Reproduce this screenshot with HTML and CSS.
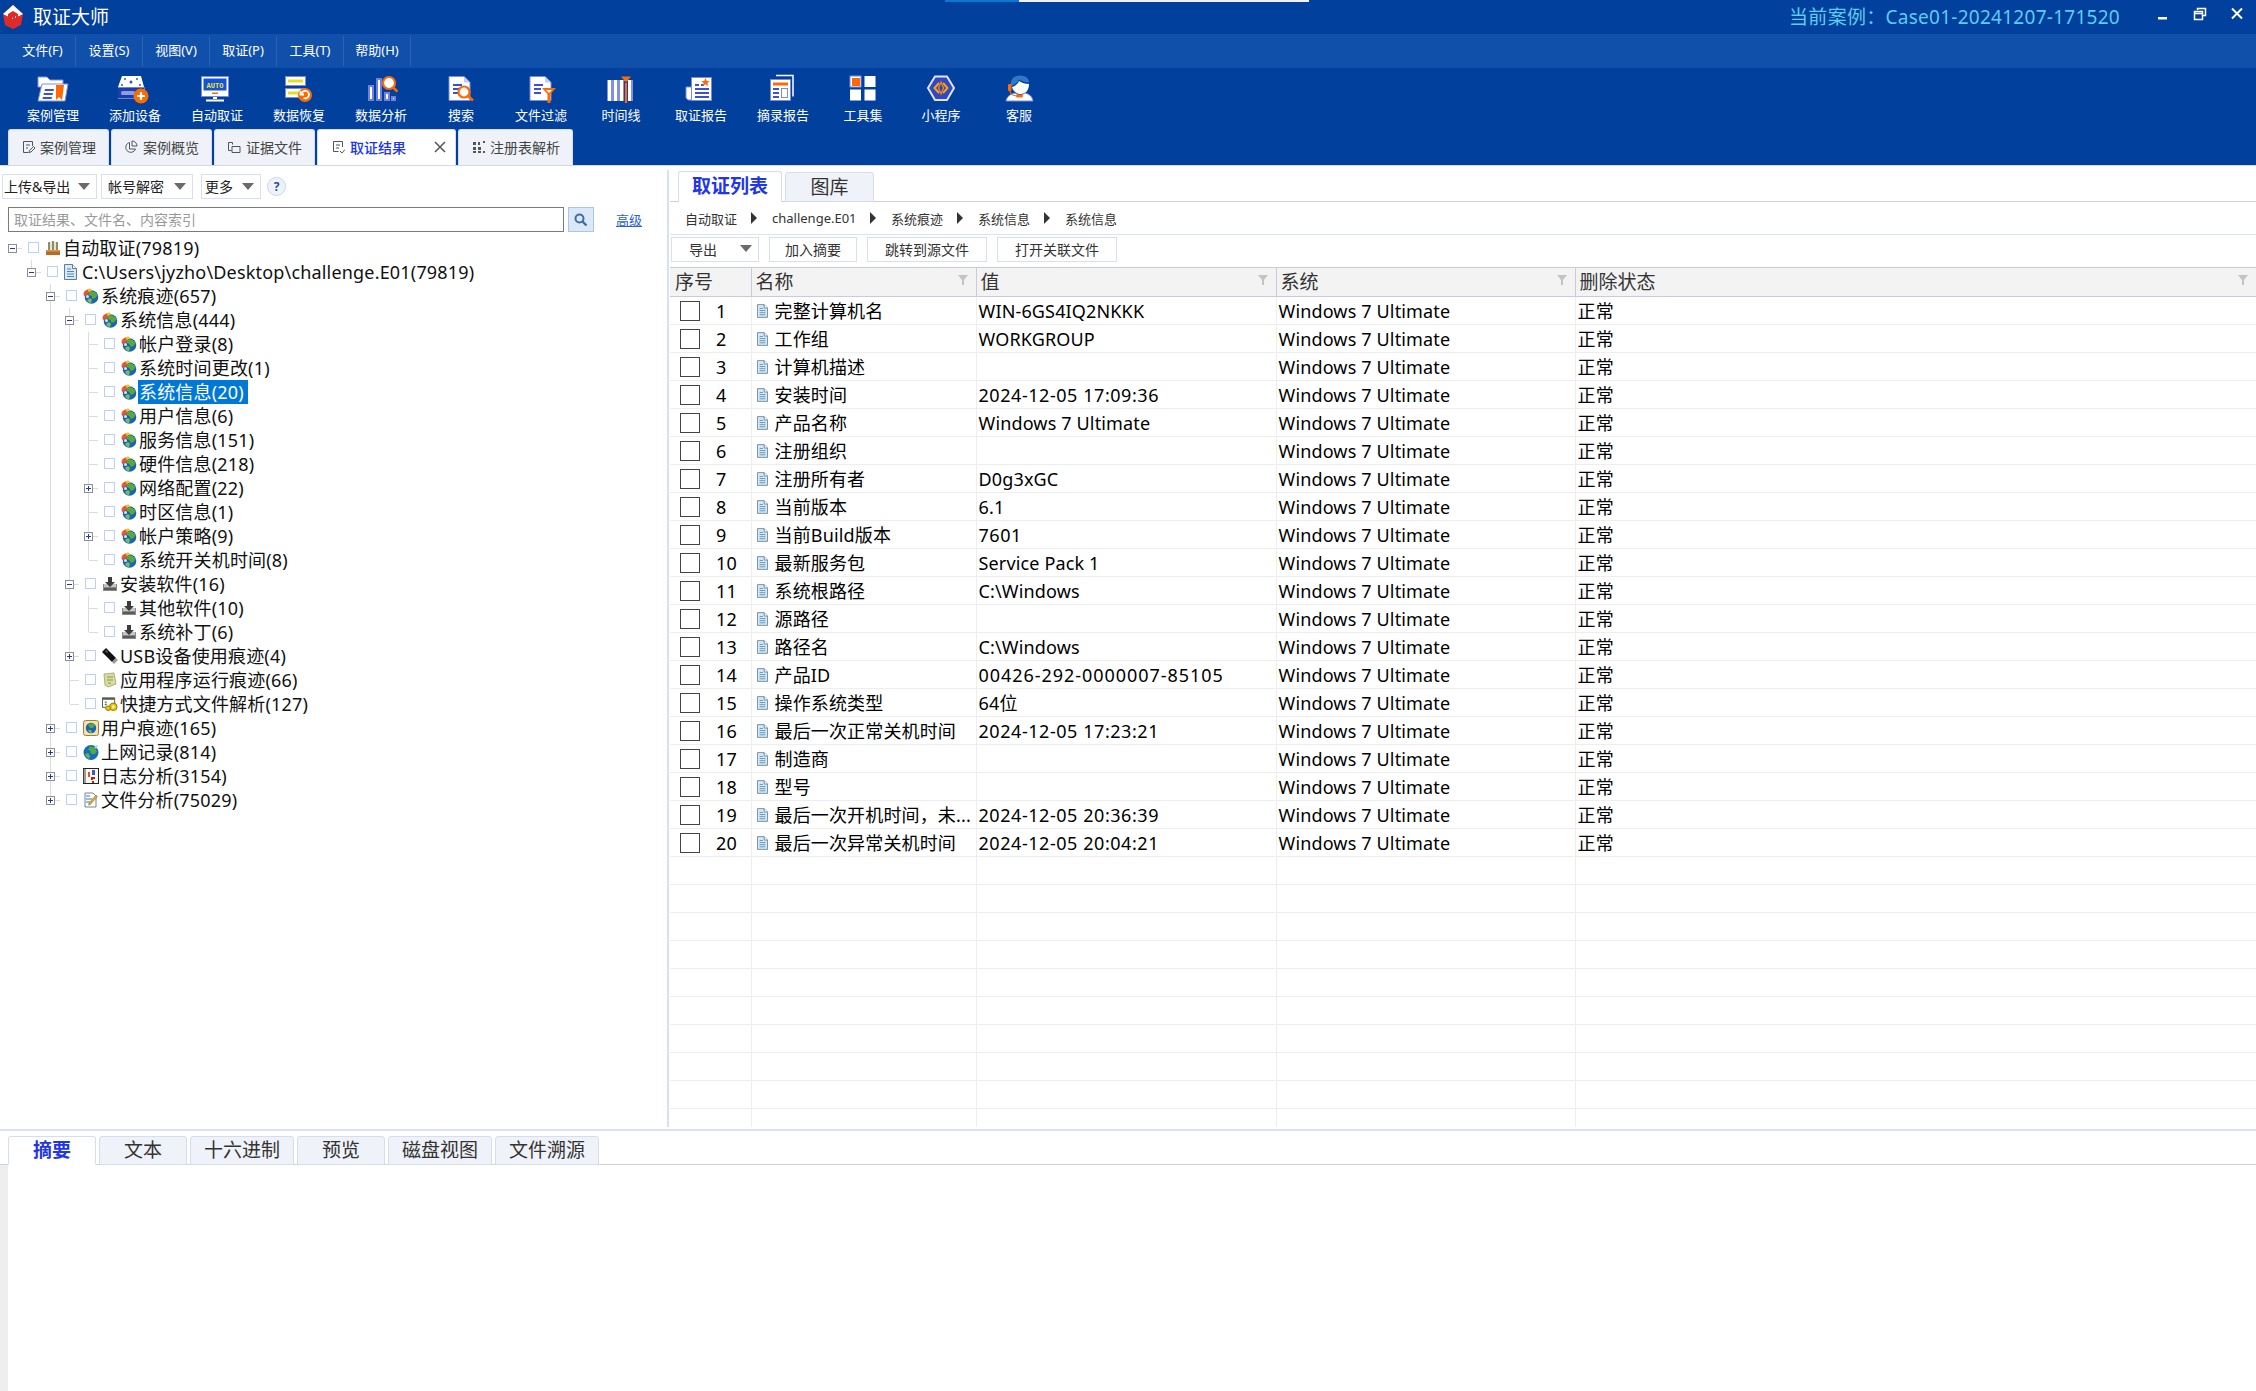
FILE: index.html
```html
<!DOCTYPE html>
<html lang="zh-CN">
<head>
<meta charset="utf-8">
<title>取证大师</title>
<link rel="stylesheet" href="styles.css">
</head>
<body>
<svg class="defs" aria-hidden="true">
  <symbol id="globe" viewBox="0 0 16 16">
    <circle cx="8.500" cy="9" r="6.800" fill="#1c62b8"/>
    <path d="M6 4c3-2 7 0 8.500 3l-2 3-3 1-1-3-3-1z" fill="#58a83c"/>
    <path d="M4 12l3-2 2 2-1 3c-2 0-3-1-4-3z" fill="#7cc04c"/>
    <path d="M.5 6c0-2 2-4.500 4.500-4.500l2 2.500-3 3-3 1z" fill="#e05a30"/>
    <path d="M4 1l4-.5 1 2-3 1.500z" fill="#f0c030"/>
    <circle cx="4.500" cy="8.500" r="1.500" fill="#cfe4fa"/>
  </symbol>
  <symbol id="setup" viewBox="0 0 16 16">
    <path d="M1 8h14v7H1z" fill="#8a8a8a"/>
    <path d="M2 8h12v3H2z" fill="#c4c4c4"/>
    <path d="M6 1h4v5h3l-5 5-5-5h3z" fill="#3c3c3c"/>
    <path d="M2 12h12v2H2z" fill="#5a5a5a"/>
  </symbol>
  <symbol id="usb" viewBox="0 0 16 16">
    <path d="M0 4l4-4 10 10-4 4z" fill="#111"/>
    <path d="M10 14l4-4 2 2-4 4z" fill="#999"/>
    <path d="M3 3l1-1 2 2-1 1z" fill="#666"/>
  </symbol>
  <symbol id="note" viewBox="0 0 16 16">
    <path d="M2 2l10-1 2 11-8 3-3-2z" fill="#d8dc9c" stroke="#9aa070" stroke-width=".8"/>
    <path d="M5 5h6M5 8h6M6 11h3" stroke="#8b9a5c" stroke-width="1"/>
  </symbol>
  <symbol id="shortcut" viewBox="0 0 17 16">
    <rect x=".5" y="1.500" width="13" height="10" fill="#fff" stroke="#555"/>
    <path d="M1 1.500h12v2H1z" fill="#555"/>
    <path d="M3 6h2M3 8.500h2" stroke="#2a8a3a" stroke-width="1.400"/>
    <circle cx="12" cy="11" r="4" fill="#f2c800" stroke="#8a7400"/>
    <circle cx="12" cy="11" r="1.300" fill="#fff"/>
    <circle cx="6.500" cy="12.500" r="2.500" fill="#f2c800" stroke="#8a7400"/>
  </symbol>
  <symbol id="user" viewBox="0 0 16 16">
    <rect x=".5" y=".5" width="15" height="15" rx="2" fill="#f3e2ae" stroke="#a8802c"/>
    <circle cx="8" cy="8" r="5.200" fill="#1c62b8"/>
    <path d="M5 5c2-2 5-2 7 0l-2 3-3 0z" fill="#58a83c"/>
    <path d="M5 10l3 0 1 3c-2 0-3-1-4-3z" fill="#7cc04c"/>
  </symbol>
  <symbol id="web" viewBox="0 0 16 16">
    <circle cx="8" cy="8.500" r="7.500" fill="#1c68c0"/>
    <path d="M7 2.500c3 0 6 2 7 5l-3 3-3-1-1-3-2-1z" fill="#4cae3c"/>
    <path d="M2 10l3-1 2 3-1 3c-2-1-3-3-4-5z" fill="#62b848"/>
    <path d="M11 3l3-2 1 1-2 3z" fill="#a8d4f4"/>
  </symbol>
  <symbol id="log" viewBox="0 0 16 16">
    <rect x=".5" y=".5" width="15" height="15" fill="#f8f8ec" stroke="#222"/>
    <path d="M.5 1v14M2 1v14" stroke="#444"/>
    <path d="M5 4h2v5H5z" fill="#e04a40"/>
    <path d="M9 2h3v5H9z" fill="#3a58d0"/>
    <path d="M8 9h4v2h-2v1H8z" fill="#b02020"/>
    <path d="M9 13h2v2H9z" fill="#b02020"/>
  </symbol>
  <symbol id="file" viewBox="0 0 16 16">
    <path d="M2 1h8l3 3v11H2z" fill="#fff" stroke="#6a86a8"/>
    <path d="M3 4h4M3 7h6M3 10h6" stroke="#3a7ac0"/>
    <path d="M6 11l7-8 1.500 1.500-7 8-2 .5z" fill="#e0b030" stroke="#7a6420" stroke-width=".5"/>
  </symbol>
  <symbol id="box" viewBox="0 0 16 16">
    <path d="M1 10h14v5H1z" fill="#b86a28"/>
    <path d="M3 2h2v9H3zM7 1h2v10H7zM11 2h2v9h-2z" fill="#8a8f70"/>
    <path d="M5 2h2v9H5zM9 2h2v9H9z" fill="#e8e4c8"/>
    <path d="M1 10h14v1.500H1z" fill="#e09848"/>
  </symbol>
  <symbol id="doc" viewBox="0 0 13 16">
    <path d="M.5 .5h8l4 4v11H.5z" fill="#d8e8f4" stroke="#5f7c94"/>
    <path d="M8.500 .5v4h4" fill="#fff" stroke="#5f7c94"/>
    <path d="M3 5h4M3 7.500h7M3 10h7M3 12.500h7" stroke="#4c8cb8"/>
  </symbol>
  <symbol id="funnel" viewBox="0 0 10 10">
    <path d="M0 0h10L6 5v5H4V5z" fill="#c4c4c8"/>
  </symbol>
</svg>

<div class="top-sliver"><span class="sliver-blue"></span><span class="sliver-white"></span></div>

<header class="titlebar">
  <svg class="logo" viewBox="0 0 20 24">
    <path d="M10 0l10 9-2 11-8 4-8-4-2-11z" fill="#e02a2a"/>
    <path d="M10 0l10 9-10 5L0 9z" fill="#fff"/>
    <path d="M5 9l5-3 5 3v8l-2 1v-7l-1 .5v7l-2 1v-7l-1 .5v7l-2-1-2-1z" fill="#e02a2a"/>
  </svg>
  <span class="app-name">取证大师</span>
  <span class="spacer"></span>
  <span class="case-name">当前案例：Case01-20241207-171520</span>
  <div class="win-controls">
    <svg class="win-btn" viewBox="0 0 14 14"><path d="M2 10h9v2.500H2z" fill="#fff"/></svg>
    <svg class="win-btn" viewBox="0 0 14 14"><path d="M4.500 3V1.500h8v7H10M1.500 4.500h8v8h-8zM1.500 4.500h8v2h-8z" fill="none" stroke="#fff" stroke-width="1.500"/></svg>
    <svg class="win-btn" viewBox="0 0 14 14"><path d="M2 1.500l10 10M12 1.500l-10 10" stroke="#fff" stroke-width="2"/></svg>
  </div>
</header>

<nav class="menubar">
  <span class="menu-item">文件(F)</span>
  <span class="menu-item">设置(S)</span>
  <span class="menu-item">视图(V)</span>
  <span class="menu-item">取证(P)</span>
  <span class="menu-item">工具(T)</span>
  <span class="menu-item">帮助(H)</span>
</nav>

<section class="toolbar">
  <div class="tool">
    <svg class="tool-icon" viewBox="1 0 34 30">
      <path d="M3 3h9l3 3h13v7H3z" fill="#fff" stroke="#8391df"/>
      <path d="M7 10h26l-3 17H3z" fill="#fff" stroke="#8391df"/>
      <path d="M10 15h9l-.5 2h-9zM9 19h9l-.5 2h-9zM8 23h9l-.5 2h-9z" fill="#3c50d2"/>
      <path d="M21 11h8l-2 15-3-3-3 3z" fill="#ff6a00"/>
    </svg>
    <span class="tool-label">案例管理</span>
  </div>
  <div class="tool">
    <svg class="tool-icon" viewBox="2 0 34 30">
      <path d="M6 2h19l3 11H2z" fill="#fff"/>
      <circle cx="9" cy="5" r="1" fill="#3c50d2"/><circle cx="21" cy="5" r="1" fill="#3c50d2"/><circle cx="15" cy="8" r="1.500" fill="#3c50d2"/>
      <circle cx="6" cy="11" r="1" fill="#3c50d2"/><circle cx="24" cy="11" r="1" fill="#3c50d2"/>
      <path d="M1.500 13.500h27v11h-27z" fill="#1c3ea8" stroke="#6f80de"/>
      <rect x="5" y="17" width="14" height="4" rx="1.500" fill="#8e9ce4"/>
      <circle cx="25" cy="22" r="7.500" fill="#ff6a00"/>
      <path d="M25 18v8M21 22h8" stroke="#fff" stroke-width="2.200"/>
    </svg>
    <span class="tool-label">添加设备</span>
  </div>
  <div class="tool">
    <svg class="tool-icon" viewBox="2 0 34 30">
      <path d="M3.500 2.500h27v20h-27z" fill="#fff" stroke="#7b8adf"/>
      <path d="M5.500 4.500h23v12h-23z" fill="#1452d8"/>
      <text class="auto-text" x="17" y="13.500">AUTO</text>
      <path d="M14 18.500h6v1.500h-6z" fill="#ff6a00"/>
      <path d="M15 23h4v2h-4zM8 25.500h18v2H8z" fill="#fff"/>
    </svg>
    <span class="tool-label">自动取证</span>
  </div>
  <div class="tool">
    <svg class="tool-icon" viewBox="0 0 34 30">
      <rect x="3.500" y="2.500" width="20" height="9" fill="#fff" stroke="#7b8adf"/>
      <path d="M6 5.500h15v3H6z" fill="#e4e020"/>
      <rect x="3.500" y="14.500" width="20" height="9" fill="#fff" stroke="#7b8adf"/>
      <path d="M6 17.500h12v3H6z" fill="#e4e020"/>
      <circle cx="23" cy="21" r="7" fill="#ff6a00"/>
      <path d="M19.500 19.500a3.800 3.800 0 1 1 2 4.500M18.500 17v3.500H22" fill="none" stroke="#fff" stroke-width="1.800"/>
    </svg>
    <span class="tool-label">数据恢复</span>
  </div>
  <div class="tool">
    <svg class="tool-icon" viewBox="0 0 34 30">
      <path d="M4 11h6v16H4zM12 4h6v23h-6zM20 18h6v9h-6zM27 22h5v5h-5z" fill="#6f80de"/>
      <path d="M6 13h2v12H6zM14 6h2v19h-2zM22 20h2v5h-2zM29 24h1v1h-1z" fill="#fff"/>
      <circle cx="25" cy="9" r="6" fill="#fff" stroke="#ff6a00" stroke-width="2.200"/>
      <path d="M29 13.500l4.500 4" stroke="#ff6a00" stroke-width="2.600"/>
    </svg>
    <span class="tool-label">数据分析</span>
  </div>
  <div class="tool tool-s">
    <svg class="tool-icon" viewBox="0 0 34 30">
      <path d="M5 2.500h15l6 6v18H5z" fill="#fff" stroke="#7b8adf"/>
      <path d="M20 2.500v6h6" fill="#c4ccf0"/>
      <path d="M9 11h9M9 15h6M9 19h6" stroke="#3c50d2" stroke-width="2"/>
      <circle cx="20" cy="18" r="5.500" fill="#fff" stroke="#ff6a00" stroke-width="2.200"/>
      <path d="M24 22l5 4.500" stroke="#ff6a00" stroke-width="2.600"/>
    </svg>
    <span class="tool-label">搜索</span>
  </div>
  <div class="tool">
    <svg class="tool-icon" viewBox="0 0 34 30">
      <path d="M6 2.500h15l6 6v18H6z" fill="#fff" stroke="#7b8adf"/>
      <path d="M21 2.500v6h6" fill="#c4ccf0"/>
      <path d="M10 11h9M10 15h7M10 19h7" stroke="#3c50d2" stroke-width="2"/>
      <path d="M18 14h14l-5.500 6v9h-3v-9z" fill="#ff6a00"/>
      <path d="M22 16h6l-3 3z" fill="#fff"/>
    </svg>
    <span class="tool-label">文件过滤</span>
  </div>
  <div class="tool tool-s">
    <svg class="tool-icon" viewBox="0 0 34 30">
      <path d="M3 6h26v21H3z" fill="#8490da"/>
      <path d="M4 6h3v21H4zM10 6h3v21h-3zM16 6h3v21h-3zM24 6h3v21h-3z" fill="#fff"/>
      <path d="M20 7h4v22h-4z" fill="#1c3ea8"/>
      <path d="M21 9h2v20h-2z" fill="#ff6a00"/>
      <path d="M17 2.500h10l-5 6z" fill="#ff6a00"/>
    </svg>
    <span class="tool-label">时间线</span>
  </div>
  <div class="tool">
    <svg class="tool-icon" viewBox="0 0 34 30">
      <path d="M2 13h6v13H4l-2-2z" fill="#fff" stroke="#7b8adf"/>
      <path d="M7.500 3.500h20v23h-20z" fill="#fff" stroke="#7b8adf"/>
      <path d="M11 10h4v2h-4zM11 14h14v2H11zM11 18h14v2H11zM11 22h14v2H11zM17 10h3v2h-3z" fill="#3c50d2"/>
      <path d="M21.500 4l1.300 3h3l-2.400 2 1 3.200-2.900-2-2.900 2 1-3.200-2.400-2h3z" fill="#ff6a00"/>
    </svg>
    <span class="tool-label">取证报告</span>
  </div>
  <div class="tool">
    <svg class="tool-icon" viewBox="0 0 34 30">
      <path d="M10 1.500h17v21" fill="none" stroke="#fff" stroke-width="1.500"/>
      <path d="M4.500 5.500h20v21h-20z" fill="#fff" stroke="#7b8adf"/>
      <path d="M7 8.500h15v3H7z" fill="#ff6a00"/>
      <path d="M7 14h6v2H7zM7 18h6v2H7zM7 22h6v2H7z" fill="#3c50d2"/>
      <rect x="15.500" y="14.500" width="6" height="9" fill="#fff" stroke="#7b8adf"/>
    </svg>
    <span class="tool-label">摘录报告</span>
  </div>
  <div class="tool tool-s">
    <svg class="tool-icon" viewBox="0 0 34 30">
      <rect x="4" y="2" width="11" height="11" fill="#fff" stroke="#7b8adf"/>
      <rect x="6" y="4" width="8" height="8" fill="#ff6a00"/>
      <rect x="18.500" y="2" width="11" height="11" fill="#fff"/>
      <rect x="4" y="15.500" width="11" height="11" fill="#fff"/>
      <rect x="18.500" y="15.500" width="11" height="11" fill="#fff"/>
    </svg>
    <span class="tool-label">工具集</span>
  </div>
  <div class="tool tool-s">
    <svg class="tool-icon" viewBox="0 0 34 30">
      <path d="M11 2.500h12l7 11.500-7 12H11L4 14z" fill="#3446c8" stroke="#dfe6fb" stroke-width="2"/>
      <path d="M15 9l-4.500 5 4.500 5M19 9l4.500 5-4.500 5" fill="none" stroke="#f5a800" stroke-width="2"/>
      <path d="M17 8l-2.500 6 2.500 6 2.500-6z" fill="none" stroke="#ff8a00" stroke-width="1.200"/>
    </svg>
    <span class="tool-label">小程序</span>
  </div>
  <div class="tool tool-s">
    <svg class="tool-icon" viewBox="0 0 34 30">
      <path d="M9 12C8 5 12 1.500 18 1.500s9 3 9 7c-3 0-7-1-10-3-1 3-4 5-8 6.500z" fill="#2f78c8"/>
      <path d="M10 13c3-1 6-3 7-6 3 2 6 3 10 3 0 6-3 10-8 10-5 0-8-3-9-7z" fill="#fff"/>
      <path d="M4 27c1-5 5-7 9-8l5 3 5-3c4 1 7 3 8 8z" fill="#fff" stroke="#7b8adf"/>
      <rect x="6" y="10" width="3.500" height="7" rx="1" fill="#ff6a00"/>
      <path d="M8 17c0 3 3 5 7 5" fill="none" stroke="#ff6a00" stroke-width="1.200"/>
      <rect x="14" y="20.500" width="7" height="3" rx="1.500" fill="#ff6a00"/>
    </svg>
    <span class="tool-label">客服</span>
  </div>
</section>

<nav class="doc-tabs">
  <div class="doc-tab doc-tab-a">
    <svg class="tab-icon" viewBox="0 0 14 14"><path d="M11.500 6V1.500h-9v11h5M5 5h4M5 8h2M8 12.500l.5-2 4-4 1.500 1.500-4 4z" fill="none" stroke="#555"/></svg>
    <span>案例管理</span>
  </div>
  <div class="doc-tab doc-tab-a">
    <svg class="tab-icon" viewBox="0 0 14 14"><path d="M5.500 2.500a5 5 0 1 0 6 6.500H5.500zM8 1a5 5 0 0 1 5 5H8z" fill="none" stroke="#555"/></svg>
    <span>案例概览</span>
  </div>
  <div class="doc-tab doc-tab-a">
    <svg class="tab-icon" viewBox="0 0 14 14"><path d="M1.500 2.500h4v2M1.500 2.500v8h3M5 6.500h8v6H5z" fill="none" stroke="#555"/></svg>
    <span>证据文件</span>
  </div>
  <div class="doc-tab doc-tab-on">
    <svg class="tab-icon" viewBox="0 0 14 14"><path d="M11.500 7V1.500h-9v10h5M5 5h4M5 8h3M9 11l2 2 3-3.500" fill="none" stroke="#555"/></svg>
    <span class="doc-tab-title">取证结果</span>
    <svg class="tab-close" viewBox="0 0 12 12"><path d="M1 1l10 10M11 1L1 11" stroke="#555" stroke-width="1.500"/></svg>
  </div>
  <div class="doc-tab doc-tab-b">
    <svg class="tab-icon" viewBox="0 0 14 14"><path d="M2 2h3v3H2zM7 2h2v3H7zM2 7h3v3H2zM7 7h3v3H7zM2 11h3v2H2zM7 11h3v2H7zM12 1h2v2h-2zM12 11h2v2h-2z" fill="#555"/></svg>
    <span>注册表解析</span>
  </div>
</nav>

<main class="workspace">
  <aside class="left">
    <div class="left-tools">
      <div class="drop drop-a"><span>上传&amp;导出</span><i class="caret"></i></div>
      <div class="drop drop-b"><span>帐号解密</span><i class="caret"></i></div>
      <div class="drop drop-c"><span>更多</span><i class="caret"></i></div>
      <div class="help">?</div>
    </div>
    <div class="search-row">
      <div class="search-input">取证结果、文件名、内容索引</div>
      <div class="search-btn">
        <svg class="search-glyph" viewBox="0 0 14 14"><circle cx="5.500" cy="5.500" r="4" fill="none" stroke="#3a6ea8" stroke-width="2"/><path d="M8.500 8.500l4 4" stroke="#3a6ea8" stroke-width="2.400"/></svg>
      </div>
      <a class="advanced">高级</a>
    </div>
    <div class="tree">
      <div class="node"><span class="c h"><b class="ex minus"></b></span><span class="ck"><i></i></span><span class="ic"><svg><use href="#box"/></svg></span><span class="label">自动取证(79819)</span></div>
      <div class="node"><span class="c"></span><span class="c lu"><b class="ex minus"></b></span><span class="ck"><i></i></span><span class="ic"><svg class="ic-doc"><use href="#doc"/></svg></span><span class="label">C:\Users\jyzho\Desktop\challenge.E01(79819)</span></div>
      <div class="node"><span class="c"></span><span class="c"></span><span class="c t"><b class="ex minus"></b></span><span class="ck"><i></i></span><span class="ic"><svg><use href="#globe"/></svg></span><span class="label">系统痕迹(657)</span></div>
      <div class="node"><span class="c"></span><span class="c"></span><span class="c v"></span><span class="c t"><b class="ex minus"></b></span><span class="ck"><i></i></span><span class="ic"><svg><use href="#globe"/></svg></span><span class="label">系统信息(444)</span></div>
      <div class="node"><span class="c"></span><span class="c"></span><span class="c v"></span><span class="c v"></span><span class="c t"></span><span class="ck"><i></i></span><span class="ic"><svg><use href="#globe"/></svg></span><span class="label">帐户登录(8)</span></div>
      <div class="node"><span class="c"></span><span class="c"></span><span class="c v"></span><span class="c v"></span><span class="c t"></span><span class="ck"><i></i></span><span class="ic"><svg><use href="#globe"/></svg></span><span class="label">系统时间更改(1)</span></div>
      <div class="node"><span class="c"></span><span class="c"></span><span class="c v"></span><span class="c v"></span><span class="c t"></span><span class="ck"><i></i></span><span class="ic"><svg><use href="#globe"/></svg></span><span class="label sel">系统信息(20)</span></div>
      <div class="node"><span class="c"></span><span class="c"></span><span class="c v"></span><span class="c v"></span><span class="c t"></span><span class="ck"><i></i></span><span class="ic"><svg><use href="#globe"/></svg></span><span class="label">用户信息(6)</span></div>
      <div class="node"><span class="c"></span><span class="c"></span><span class="c v"></span><span class="c v"></span><span class="c t"></span><span class="ck"><i></i></span><span class="ic"><svg><use href="#globe"/></svg></span><span class="label">服务信息(151)</span></div>
      <div class="node"><span class="c"></span><span class="c"></span><span class="c v"></span><span class="c v"></span><span class="c t"></span><span class="ck"><i></i></span><span class="ic"><svg><use href="#globe"/></svg></span><span class="label">硬件信息(218)</span></div>
      <div class="node"><span class="c"></span><span class="c"></span><span class="c v"></span><span class="c v"></span><span class="c t"><b class="ex plus"></b></span><span class="ck"><i></i></span><span class="ic"><svg><use href="#globe"/></svg></span><span class="label">网络配置(22)</span></div>
      <div class="node"><span class="c"></span><span class="c"></span><span class="c v"></span><span class="c v"></span><span class="c t"></span><span class="ck"><i></i></span><span class="ic"><svg><use href="#globe"/></svg></span><span class="label">时区信息(1)</span></div>
      <div class="node"><span class="c"></span><span class="c"></span><span class="c v"></span><span class="c v"></span><span class="c t"><b class="ex plus"></b></span><span class="ck"><i></i></span><span class="ic"><svg><use href="#globe"/></svg></span><span class="label">帐户策略(9)</span></div>
      <div class="node"><span class="c"></span><span class="c"></span><span class="c v"></span><span class="c v"></span><span class="c l"></span><span class="ck"><i></i></span><span class="ic"><svg><use href="#globe"/></svg></span><span class="label">系统开关机时间(8)</span></div>
      <div class="node"><span class="c"></span><span class="c"></span><span class="c v"></span><span class="c t"><b class="ex minus"></b></span><span class="ck"><i></i></span><span class="ic"><svg><use href="#setup"/></svg></span><span class="label">安装软件(16)</span></div>
      <div class="node"><span class="c"></span><span class="c"></span><span class="c v"></span><span class="c v"></span><span class="c t"></span><span class="ck"><i></i></span><span class="ic"><svg><use href="#setup"/></svg></span><span class="label">其他软件(10)</span></div>
      <div class="node"><span class="c"></span><span class="c"></span><span class="c v"></span><span class="c v"></span><span class="c l"></span><span class="ck"><i></i></span><span class="ic"><svg><use href="#setup"/></svg></span><span class="label">系统补丁(6)</span></div>
      <div class="node"><span class="c"></span><span class="c"></span><span class="c v"></span><span class="c t"><b class="ex plus"></b></span><span class="ck"><i></i></span><span class="ic"><svg><use href="#usb"/></svg></span><span class="label">USB设备使用痕迹(4)</span></div>
      <div class="node"><span class="c"></span><span class="c"></span><span class="c v"></span><span class="c t"></span><span class="ck"><i></i></span><span class="ic"><svg><use href="#note"/></svg></span><span class="label">应用程序运行痕迹(66)</span></div>
      <div class="node"><span class="c"></span><span class="c"></span><span class="c v"></span><span class="c l"></span><span class="ck"><i></i></span><span class="ic"><svg><use href="#shortcut"/></svg></span><span class="label">快捷方式文件解析(127)</span></div>
      <div class="node"><span class="c"></span><span class="c"></span><span class="c t"><b class="ex plus"></b></span><span class="ck"><i></i></span><span class="ic"><svg><use href="#user"/></svg></span><span class="label">用户痕迹(165)</span></div>
      <div class="node"><span class="c"></span><span class="c"></span><span class="c t"><b class="ex plus"></b></span><span class="ck"><i></i></span><span class="ic"><svg><use href="#web"/></svg></span><span class="label">上网记录(814)</span></div>
      <div class="node"><span class="c"></span><span class="c"></span><span class="c t"><b class="ex plus"></b></span><span class="ck"><i></i></span><span class="ic"><svg><use href="#log"/></svg></span><span class="label">日志分析(3154)</span></div>
      <div class="node"><span class="c"></span><span class="c"></span><span class="c l"><b class="ex plus"></b></span><span class="ck"><i></i></span><span class="ic"><svg><use href="#file"/></svg></span><span class="label">文件分析(75029)</span></div>
    </div>
  </aside>

  <div class="splitter"></div>

  <section class="right">
    <div class="list-tabs">
      <div class="list-tab list-tab-on">取证列表</div>
      <div class="list-tab list-tab-off">图库</div>
    </div>
    <div class="crumbs">
      <span class="crumb crumb-a">自动取证</span><i class="arrow"></i>
      <span class="crumb crumb-b">challenge.E01</span><i class="arrow"></i>
      <span class="crumb crumb-a">系统痕迹</span><i class="arrow"></i>
      <span class="crumb crumb-a">系统信息</span><i class="arrow"></i>
      <span class="crumb">系统信息</span>
    </div>
    <div class="actions">
      <div class="act act-export"><span>导出</span><i class="caret"></i></div>
      <div class="act act-add">加入摘要</div>
      <div class="act act-wide">跳转到源文件</div>
      <div class="act act-wide">打开关联文件</div>
    </div>
    <div class="grid-wrap">
      <table class="grid">
        <colgroup><col class="col-no"><col class="col-name"><col class="col-val"><col class="col-sys"><col></colgroup>
        <thead>
          <tr>
            <th>序号</th>
            <th><div class="th-in"><span>名称</span><svg class="th-filter"><use href="#funnel"/></svg></div></th>
            <th><div class="th-in"><span>值</span><svg class="th-filter"><use href="#funnel"/></svg></div></th>
            <th><div class="th-in"><span>系统</span><svg class="th-filter"><use href="#funnel"/></svg></div></th>
            <th><div class="th-in"><span>删除状态</span><svg class="th-filter"><use href="#funnel"/></svg></div></th>
          </tr>
        </thead>
        <tbody>
          <tr><td><div class="no"><i class="box"></i><span>1</span></div></td><td><div class="nm"><svg class="row-doc"><use href="#doc"/></svg><span>完整计算机名</span></div></td><td>WIN-6GS4IQ2NKKK</td><td>Windows 7 Ultimate</td><td>正常</td></tr>
          <tr><td><div class="no"><i class="box"></i><span>2</span></div></td><td><div class="nm"><svg class="row-doc"><use href="#doc"/></svg><span>工作组</span></div></td><td>WORKGROUP</td><td>Windows 7 Ultimate</td><td>正常</td></tr>
          <tr><td><div class="no"><i class="box"></i><span>3</span></div></td><td><div class="nm"><svg class="row-doc"><use href="#doc"/></svg><span>计算机描述</span></div></td><td></td><td>Windows 7 Ultimate</td><td>正常</td></tr>
          <tr><td><div class="no"><i class="box"></i><span>4</span></div></td><td><div class="nm"><svg class="row-doc"><use href="#doc"/></svg><span>安装时间</span></div></td><td class="num">2024-12-05 17:09:36</td><td>Windows 7 Ultimate</td><td>正常</td></tr>
          <tr><td><div class="no"><i class="box"></i><span>5</span></div></td><td><div class="nm"><svg class="row-doc"><use href="#doc"/></svg><span>产品名称</span></div></td><td>Windows 7 Ultimate</td><td>Windows 7 Ultimate</td><td>正常</td></tr>
          <tr><td><div class="no"><i class="box"></i><span>6</span></div></td><td><div class="nm"><svg class="row-doc"><use href="#doc"/></svg><span>注册组织</span></div></td><td></td><td>Windows 7 Ultimate</td><td>正常</td></tr>
          <tr><td><div class="no"><i class="box"></i><span>7</span></div></td><td><div class="nm"><svg class="row-doc"><use href="#doc"/></svg><span>注册所有者</span></div></td><td>D0g3xGC</td><td>Windows 7 Ultimate</td><td>正常</td></tr>
          <tr><td><div class="no"><i class="box"></i><span>8</span></div></td><td><div class="nm"><svg class="row-doc"><use href="#doc"/></svg><span>当前版本</span></div></td><td>6.1</td><td>Windows 7 Ultimate</td><td>正常</td></tr>
          <tr><td><div class="no"><i class="box"></i><span>9</span></div></td><td><div class="nm"><svg class="row-doc"><use href="#doc"/></svg><span>当前Build版本</span></div></td><td class="num">7601</td><td>Windows 7 Ultimate</td><td>正常</td></tr>
          <tr><td><div class="no"><i class="box"></i><span>10</span></div></td><td><div class="nm"><svg class="row-doc"><use href="#doc"/></svg><span>最新服务包</span></div></td><td>Service Pack 1</td><td>Windows 7 Ultimate</td><td>正常</td></tr>
          <tr><td><div class="no"><i class="box"></i><span>11</span></div></td><td><div class="nm"><svg class="row-doc"><use href="#doc"/></svg><span>系统根路径</span></div></td><td>C:\Windows</td><td>Windows 7 Ultimate</td><td>正常</td></tr>
          <tr><td><div class="no"><i class="box"></i><span>12</span></div></td><td><div class="nm"><svg class="row-doc"><use href="#doc"/></svg><span>源路径</span></div></td><td></td><td>Windows 7 Ultimate</td><td>正常</td></tr>
          <tr><td><div class="no"><i class="box"></i><span>13</span></div></td><td><div class="nm"><svg class="row-doc"><use href="#doc"/></svg><span>路径名</span></div></td><td>C:\Windows</td><td>Windows 7 Ultimate</td><td>正常</td></tr>
          <tr><td><div class="no"><i class="box"></i><span>14</span></div></td><td><div class="nm"><svg class="row-doc"><use href="#doc"/></svg><span>产品ID</span></div></td><td class="num-wide">00426-292-0000007-85105</td><td>Windows 7 Ultimate</td><td>正常</td></tr>
          <tr><td><div class="no"><i class="box"></i><span>15</span></div></td><td><div class="nm"><svg class="row-doc"><use href="#doc"/></svg><span>操作系统类型</span></div></td><td>64位</td><td>Windows 7 Ultimate</td><td>正常</td></tr>
          <tr><td><div class="no"><i class="box"></i><span>16</span></div></td><td><div class="nm"><svg class="row-doc"><use href="#doc"/></svg><span>最后一次正常关机时间</span></div></td><td class="num">2024-12-05 17:23:21</td><td>Windows 7 Ultimate</td><td>正常</td></tr>
          <tr><td><div class="no"><i class="box"></i><span>17</span></div></td><td><div class="nm"><svg class="row-doc"><use href="#doc"/></svg><span>制造商</span></div></td><td></td><td>Windows 7 Ultimate</td><td>正常</td></tr>
          <tr><td><div class="no"><i class="box"></i><span>18</span></div></td><td><div class="nm"><svg class="row-doc"><use href="#doc"/></svg><span>型号</span></div></td><td></td><td>Windows 7 Ultimate</td><td>正常</td></tr>
          <tr><td><div class="no"><i class="box"></i><span>19</span></div></td><td><div class="nm"><svg class="row-doc"><use href="#doc"/></svg><span>最后一次开机时间，未...</span></div></td><td class="num">2024-12-05 20:36:39</td><td>Windows 7 Ultimate</td><td>正常</td></tr>
          <tr><td><div class="no"><i class="box"></i><span>20</span></div></td><td><div class="nm"><svg class="row-doc"><use href="#doc"/></svg><span>最后一次异常关机时间</span></div></td><td class="num">2024-12-05 20:04:21</td><td>Windows 7 Ultimate</td><td>正常</td></tr>
          <tr><td></td><td></td><td></td><td></td><td></td></tr>
          <tr><td></td><td></td><td></td><td></td><td></td></tr>
          <tr><td></td><td></td><td></td><td></td><td></td></tr>
          <tr><td></td><td></td><td></td><td></td><td></td></tr>
          <tr><td></td><td></td><td></td><td></td><td></td></tr>
          <tr><td></td><td></td><td></td><td></td><td></td></tr>
          <tr><td></td><td></td><td></td><td></td><td></td></tr>
          <tr><td></td><td></td><td></td><td></td><td></td></tr>
          <tr><td></td><td></td><td></td><td></td><td></td></tr>
          <tr><td></td><td></td><td></td><td></td><td></td></tr>
        </tbody>
      </table>
    </div>
  </section>
</main>

<section class="bottom">
  <div class="bottom-tabs">
    <div class="b-tab b-tab-on b-s">摘要</div>
    <div class="b-tab b-s">文本</div>
    <div class="b-tab b-w">十六进制</div>
    <div class="b-tab b-s">预览</div>
    <div class="b-tab b-w">磁盘视图</div>
    <div class="b-tab b-w">文件溯源</div>
  </div>
  <div class="bottom-body"><div class="bottom-rail"></div><div class="bottom-pane"></div></div>
</section>
</body>
</html>
```

FILE: styles.css
```css
* { box-sizing: border-box; }
html, body { margin: 0; padding: 0; }
body {
  width: 2256px;
  height: 1391px;
  overflow: hidden;
  display: flex;
  flex-direction: column;
  background: #fff;
  color: #222;
  font-family: "Noto Sans", "Noto Sans CJK SC", sans-serif;
}
.defs { position: absolute; width: 0; height: 0; }

/* very top strip of another window */
.top-sliver { position: absolute; top: 0; left: 945px; height: 2px; display: flex; z-index: 2; }
.sliver-blue { width: 74px; background: #0a78d0; }
.sliver-white { width: 290px; background: #f2f2f2; }

/* title */
.titlebar { height: 34px; flex: none; display: flex; align-items: center; background: #01409c; color: #fff; padding-left: 3px; }
.logo { width: 20px; height: 24px; margin-right: 10px; }
.app-name { font-size: 19px; line-height: 34px; }
.spacer { flex: 1; }
.case-name { font-size: 19px; line-height: 34px; color: #5ccdf2; letter-spacing: .27px; }
.win-controls { display: flex; align-items: flex-start; align-self: flex-start; margin: 7px 12px 0 36px; gap: 23px; }
.win-btn { width: 14px; height: 14px; }

/* menu */
.menubar { height: 34px; flex: none; display: flex; background: #1150aa; color: #fff; padding-left: 10px; font-size: 13px; }
.menu-item { width: 67px; text-align: center; border-right: 1px solid #2a62b4; margin: 2px 0; line-height: 29px; }
.menu-item:first-child { width: 66px; }

/* toolbar */
.toolbar { height: 61px; flex: none; display: flex; background: #01409c; padding: 6px 0 0 12px; }
.tool { width: 82px; display: flex; flex-direction: column; align-items: center; color: #fff; }
.tool-s { width: 78px; }
.tool-icon { width: 34px; height: 30px; flex: none; }
.tool-label { font-size: 13px; line-height: 18px; margin-top: 2px; white-space: nowrap; }
.auto-text { font-family: "Liberation Mono", monospace; font-size: 7px; font-weight: 700; fill: #f0e820; text-anchor: middle; }

/* document tabs */
.doc-tabs { height: 37px; flex: none; display: flex; gap: 2px; background: #01409c; padding-left: 8px; border-bottom: 1px solid #d4d8e2; }
.doc-tab { height: 36px; background: #eff2f8; border: 1px solid #d4deee; border-bottom: 0; border-radius: 3px 3px 0 0; display: flex; align-items: center; justify-content: center; gap: 5px; font-size: 14px; color: #444; padding-bottom: 1px; }
.doc-tab-a { width: 101px; }
.doc-tab-on { width: 139px; background: #fff; justify-content: flex-start; padding-left: 13px; color: #2236e8; }
.doc-tab-b { width: 115px; }
.doc-tab-title { font-weight: 500; width: 68px; }
.tab-icon { width: 14px; height: 14px; flex: none; }
.tab-close { width: 12px; height: 12px; margin-left: 11px; }

/* workspace */
.workspace { height: 965px; flex: none; display: flex; border-bottom: 2px solid #d9e2f2; }
.left { width: 667px; flex: none; display: flex; flex-direction: column; }
.splitter { width: 2px; flex: none; background: #d7e1f3; margin: 4px 0 2px; }

.left-tools { display: flex; align-items: center; height: 25px; margin-top: 8px; padding-left: 2px; font-size: 14px; }
.drop { height: 25px; border: 1px solid #d6e0ef; display: flex; align-items: center; justify-content: space-between; background: #fff; padding-bottom: 1px; }
.drop-a { width: 95px; padding-left: 1px; padding-right: 6px; margin-right: 4px; }
.drop-b { width: 92px; padding-left: 6px; padding-right: 6px; margin-right: 8px; }
.drop-c { width: 60px; padding-left: 3px; padding-right: 6px; margin-right: 6px; }
.caret { width: 0; height: 0; flex: none; border-left: 6px solid transparent; border-right: 6px solid transparent; border-top: 7px solid #6a6a6a; }
.help { width: 19px; height: 19px; border-radius: 50%; border: 1px solid #c8d6ea; background: #eef3fb; color: #1c4fa8; font-size: 12px; font-weight: 700; line-height: 17px; text-align: center; }

.search-row { display: flex; align-items: center; margin-top: 8px; padding-left: 8px; }
.search-input { width: 556px; height: 25px; border: 1px solid #7a7a7a; font-size: 14px; color: #9a9a9a; line-height: 23px; padding-left: 5px; }
.search-btn { width: 26px; height: 25px; margin-left: 4px; background: #dbe8f8; border: 1px solid #a9c6ea; display: flex; align-items: center; justify-content: center; }
.search-glyph { width: 14px; height: 14px; }
.advanced { margin-left: 22px; font-size: 13px; color: #2a60d8; text-decoration: underline; }

/* tree */
.tree { margin-top: 4px; padding-left: 3px; font-size: 18px; color: #111; letter-spacing: .18px; }
.node { height: 24px; display: flex; align-items: center; }
.c { width: 19px; height: 24px; flex: none; display: flex; align-items: center; justify-content: center; background-repeat: no-repeat; }
.v { background-image: linear-gradient(#dcdcdc, #dcdcdc); background-position: 9px 0; background-size: 1px 100%; }
.t { background-image: linear-gradient(#dcdcdc, #dcdcdc), linear-gradient(#dcdcdc, #dcdcdc); background-position: 9px 0, 10px 12px; background-size: 1px 100%, 9px 1px; }
.l { background-image: linear-gradient(#dcdcdc, #dcdcdc), linear-gradient(#dcdcdc, #dcdcdc); background-position: 9px 0, 10px 12px; background-size: 1px 12px, 9px 1px; }
.lu { background-image: linear-gradient(#dcdcdc, #dcdcdc), linear-gradient(#dcdcdc, #dcdcdc); background-position: 9px 0, 10px 12px; background-size: 1px 12px, 9px 1px; }
.h { background-image: linear-gradient(#dcdcdc, #dcdcdc); background-position: 10px 12px; background-size: 9px 1px; }
.ex { width: 9px; height: 9px; border: 1px solid #8a8f9c; background-color: #fff; background-repeat: no-repeat; background-position: center; }
.minus { background-image: linear-gradient(#26398e, #26398e); background-size: 5px 1px; }
.plus { background-image: linear-gradient(#26398e, #26398e), linear-gradient(#26398e, #26398e); background-size: 5px 1px, 1px 5px; }
.ck { width: 19px; flex: none; display: flex; padding-left: 6px; }
.ck i { width: 11px; height: 11px; border: 1px solid #bcd0f8; background: #fff; display: block; margin-top: -1px; }
.ic { width: 21px; flex: none; display: flex; align-items: center; padding-left: 4px; }
.ic svg { width: 16px; height: 16px; flex: none; }
.ic svg.ic-doc { width: 13px; height: 16px; }
.label { height: 24px; line-height: 24px; padding: 0 1px; white-space: nowrap; }
.sel { background: #0078d7; color: #fff; padding-right: 4px; }

/* right */
.right { flex: 1; min-width: 0; display: flex; flex-direction: column; padding-left: 1px; }
.list-tabs { height: 36px; flex: none; display: flex; align-items: flex-end; padding-left: 8px; gap: 3px; border-bottom: 1px solid #cfd0dc; }
.list-tab { height: 30px; border: 1px solid #d4deee; border-bottom: 0; border-radius: 3px 3px 0 0; font-size: 19px; line-height: 28px; text-align: center; margin-bottom: -1px; }
.list-tab-on { width: 104px; background: #fff; color: #2236e8; font-weight: 700; height: 31px; }
.list-tab-off { width: 89px; background: #eff2f8; color: #333; border-bottom: 1px solid #d4deee; }

.crumbs { height: 33px; flex: none; display: flex; align-items: center; padding-left: 15px; font-size: 13px; color: #333; border-bottom: 1px solid #dbe4f2; }
.crumb { white-space: nowrap; }
.crumb-a { width: 66px; }
.crumb-b { width: 98px; }
.arrow { width: 0; height: 0; flex: none; margin-right: 15px; border-top: 6px solid transparent; border-bottom: 6px solid transparent; border-left: 6px solid #333; }

.actions { height: 32px; flex: none; display: flex; gap: 10px; padding: 2px 0 0 1px; font-size: 14px; color: #333; }
.act { height: 25px; border: 1px solid #d6e0ef; display: flex; align-items: center; justify-content: center; padding-bottom: 2px; }
.act-export { width: 88px; justify-content: space-between; padding-left: 17px; padding-right: 6px; }
.act-add { width: 88px; }
.act-wide { width: 120px; }

.grid-wrap { flex: 1; min-height: 0; overflow: hidden; margin-bottom: 2px; }
.grid { border-collapse: collapse; table-layout: fixed; width: 100%; font-size: 18px; color: #000; letter-spacing: .15px; }
.col-no { width: 81px; }
.col-name { width: 225px; }
.col-val { width: 300px; }
.col-sys { width: 299px; }
.grid th { height: 29px; padding: 0 0 0 4px; background: #f3f3f3; border: 1px solid #ccc9da; font-size: 19px; font-weight: 400; color: #333; text-align: left; line-height: 27px; white-space: nowrap; letter-spacing: 0; }
.grid th:first-child { padding-left: 5px; }
.grid th:last-child { border-right: 0; }
.th-in { display: flex; align-items: center; justify-content: space-between; padding-right: 8px; }
.th-filter { width: 10px; height: 10px; flex: none; margin-top: -4px; }
.grid td { height: 28px; padding: 1px 0 0 2px; border: 1px solid #eeeeef; border-top: 0; line-height: 26px; white-space: nowrap; overflow: hidden; }
.grid td:first-child, .grid th:first-child { border-left: 0; }
.grid td:last-child { border-right: 0; }
.grid td.num { letter-spacing: .55px; }
.grid td.num-wide { letter-spacing: .95px; }
.no { display: flex; align-items: center; padding-left: 8px; }
.box { width: 20px; height: 20px; border: 1px solid #444; background: #fff; flex: none; margin-right: 16px; }
.nm { display: flex; align-items: center; margin-left: 1px; }
.row-doc { width: 11px; height: 14px; flex: none; margin: 0 7px 0 2px; }

/* bottom */
.bottom { flex: 1; min-height: 0; display: flex; flex-direction: column; }
.bottom-tabs { height: 34px; flex: none; display: flex; align-items: flex-end; padding-left: 8px; gap: 3px; border-bottom: 1px solid #cfd0dc; }
.b-tab { height: 29px; border: 1px solid #d4deee; border-radius: 3px 3px 0 0; background: #eff2f8; color: #333; font-size: 19px; line-height: 26px; text-align: center; margin-bottom: -1px; }
.b-s { width: 88px; }
.b-w { width: 104px; }
.b-tab-on { background: #fff; color: #2236e8; font-weight: 700; border-bottom-color: #fff; }
.bottom-body { flex: 1; display: flex; }
.bottom-rail { width: 8px; background: #eeeeee; }
.bottom-pane { flex: 1; background: #fff; }
```
